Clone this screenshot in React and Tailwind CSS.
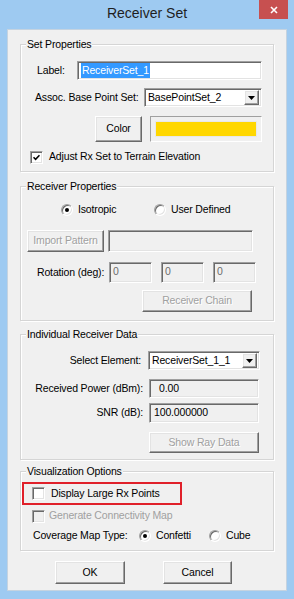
import React from 'react';

const font = { fontFamily: '"Liberation Sans", Arial, sans-serif' };

function Group({ title, className = '', children }) {
  return (
    <div className={`relative border border-[#d5d5d5] shadow-[1px_1px_0_#ffffff,inset_1px_1px_0_#ffffff] ${className}`}>
      <span className="absolute -top-[8px] left-[5px] bg-[#f0f0f0] px-[1px] leading-[14px] text-black">{title}</span>
      {children}
    </div>
  );
}

function Button({ children, disabled, className = '' }) {
  return (
    <div
      className={`flex items-center justify-center bg-[#f0f0f0] border border-t-white border-l-white border-r-[#696969] border-b-[#696969] shadow-[inset_-1px_-1px_0_#a0a0a0,inset_1px_1px_0_#e3e3e3] ${
        disabled ? 'text-[#a0a0a0] [text-shadow:1px_1px_0_#ffffff]' : 'text-black'
      } ${className}`}
    >
      {children}
    </div>
  );
}

function Field({ children, disabled, className = '' }) {
  return (
    <div
      className={`flex items-center border border-t-[#a0a0a0] border-l-[#a0a0a0] border-r-white border-b-white shadow-[inset_1px_1px_0_#696969,inset_-1px_-1px_0_#e3e3e3] ${
        disabled ? 'bg-[#f0f0f0] text-[#6d6d6d]' : 'bg-white text-black'
      } ${className}`}
    >
      {children}
    </div>
  );
}

function Select({ value, className = '' }) {
  return (
    <Field className={`pl-[3px] pr-[2px] ${className}`}>
      <span className="flex-1">{value}</span>
      <Button className="w-[15px] h-[15px]">
        <svg width="7" height="4" viewBox="0 0 7 4">
          <path d="M0 0h7L3.5 4z" fill="#000" />
        </svg>
      </Button>
    </Field>
  );
}

function Check({ checked, disabled }) {
  return (
    <div
      className={`w-[13px] h-[13px] flex items-center justify-center border border-t-[#a0a0a0] border-l-[#a0a0a0] border-r-white border-b-white shadow-[inset_1px_1px_0_#696969,inset_-1px_-1px_0_#e3e3e3] ${
        disabled ? 'bg-[#f0f0f0]' : 'bg-white'
      }`}
    >
      {checked && (
        <svg width="7" height="7" viewBox="0 0 7 7">
          <path d="M0.5 3.2 L2.6 5.3 L6.5 1.2" stroke="#000" strokeWidth="1.6" fill="none" />
        </svg>
      )}
    </div>
  );
}

function Radio({ checked }) {
  return (
    <div className="w-[12px] h-[12px] rounded-full flex items-center justify-center bg-white border border-t-[#a0a0a0] border-l-[#a0a0a0] border-r-white border-b-white shadow-[inset_1px_1px_0_#696969,inset_-1px_-1px_0_#e3e3e3]">
      {checked && <div className="w-[4px] h-[4px] rounded-full bg-black" />}
    </div>
  );
}

export default function App() {
  return (
    <div className="w-[294px] h-[599px] bg-[#9ecaf1] flex flex-col text-[10.5px] tracking-[-0.15px] text-black" style={font}>
      {/* title bar */}
      <div className="relative h-[29px] flex items-center justify-center">
        <span className="text-[14px] tracking-normal text-[#1e1e1e] -mt-[2px]">Receiver Set</span>
        <div className="absolute top-0 right-[6px] w-[29px] h-[19px] bg-[#c75050] flex items-center justify-center">
          <svg width="8" height="8" viewBox="0 0 8 8">
            <path d="M1 1L7 7M7 1L1 7" stroke="#fff" strokeWidth="1.6" />
          </svg>
        </div>
      </div>

      {/* dialog body */}
      <div className="flex-1 mx-[7px] mb-[8px] bg-[#f0f0f0] border border-[#c5d3e0] px-[12px] flex flex-col">
        <Group title="Set Properties" className="mt-[14px] pt-[16px] pb-[7px] pr-[11px]">
          <div className="flex items-center h-[19px]">
            <span className="ml-[16px]">Label:</span>
            <Field className="ml-auto w-[185px] h-[19px] pl-[3px]">
              <span className="bg-[#3399ff] text-white px-[1px]">ReceiverSet_1</span>
            </Field>
          </div>
          <div className="flex items-center h-[19px] mt-[8px]">
            <span className="ml-[14px]">Assoc. Base Point Set:</span>
            <Select value="BasePointSet_2" className="ml-auto w-[118px] h-[19px]" />
          </div>
          <div className="flex items-center justify-end h-[26px] mt-[9px] gap-[8px]">
            <Button className="w-[47px] h-[26px]">Color</Button>
            <div className="w-[112px] h-[26px] border border-t-[#a0a0a0] border-l-[#a0a0a0] border-r-white border-b-white p-[4px] bg-[#f0f0f0]">
              <div className="w-full h-full bg-[#ffd700] border border-[#e8e8e8]" />
            </div>
          </div>
          <div className="flex items-center h-[14px] mt-[8px] ml-[9px] gap-[6px]">
            <Check checked />
            <span>Adjust Rx Set to Terrain Elevation</span>
          </div>
        </Group>

        <Group title="Receiver Properties" className="mt-[14px] pt-[16px] pb-[8px]">
          <div className="flex items-center h-[14px] ml-[40px]">
            <div className="flex items-center gap-[5px] w-[93px]">
              <Radio checked />
              <span>Isotropic</span>
            </div>
            <div className="flex items-center gap-[5px]">
              <Radio />
              <span>User Defined</span>
            </div>
          </div>
          <div className="flex items-center h-[22px] mt-[13px] ml-[6px] gap-[4px]">
            <Button disabled className="w-[77px] h-[22px]">Import Pattern</Button>
            <Field disabled className="w-[145px] h-[22px]" />
          </div>
          <div className="flex items-center h-[21px] mt-[10px] ml-[16px]">
            <span className="w-[72px]">Rotation (deg):</span>
            <div className="flex gap-[9px]">
              {['0', '0', '0'].map((v, i) => (
                <Field key={i} disabled className="w-[43px] h-[21px] items-start pl-[3px] pt-[1px]">
                  {v}
                </Field>
              ))}
            </div>
          </div>
          <div className="flex h-[22px] mt-[7px] ml-[121px]">
            <Button disabled className="w-[110px] h-[22px]">Receiver Chain</Button>
          </div>
        </Group>

        <Group title="Individual Receiver Data" className="mt-[13px] pt-[16px] pb-[6px]">
          <div className="flex items-center h-[19px]">
            <span className="w-[120px] text-right">Select Element:</span>
            <Select value="ReceiverSet_1_1" className="ml-[7px] w-[112px] h-[19px]" />
          </div>
          <div className="flex items-center h-[19px] mt-[9px]">
            <span className="w-[122px] text-right">Received Power (dBm):</span>
            <Field disabled className="ml-[6px] w-[110px] h-[19px] pl-[9px] !text-black">0.00</Field>
          </div>
          <div className="flex items-center h-[20px] mt-[5px]">
            <span className="w-[122px] text-right">SNR (dB):</span>
            <Field disabled className="ml-[6px] w-[110px] h-[20px] pl-[4px] !text-black">100.000000</Field>
          </div>
          <div className="flex h-[21px] mt-[9px] ml-[128px]">
            <Button disabled className="w-[110px] h-[21px]">Show Ray Data</Button>
          </div>
        </Group>

        <Group title="Visualization Options" className="mt-[11px] pt-[10px] pb-[7px]">
          <div className="flex items-center ml-[1px] w-[160px] h-[23px] border-2 border-[#e0202a] pl-[8px] gap-[6px]">
            <Check />
            <span>Display Large Rx Points</span>
          </div>
          <div className="flex items-center h-[14px] mt-[4px] ml-[11px] gap-[4px] text-[#a0a0a0]">
            <Check disabled />
            <span>Generate Connectivity Map</span>
          </div>
          <div className="flex items-center h-[14px] mt-[6px] ml-[12px]">
            <span className="w-[106px]">Coverage Map Type:</span>
            <div className="flex items-center gap-[5px] w-[70px]">
              <Radio checked />
              <span>Confetti</span>
            </div>
            <div className="flex items-center gap-[5px]">
              <Radio />
              <span>Cube</span>
            </div>
          </div>
        </Group>

        <div className="flex mt-[10px] ml-[35px] gap-[38px]">
          <Button className="w-[70px] h-[23px]">OK</Button>
          <Button className="w-[69px] h-[23px]">Cancel</Button>
        </div>
      </div>
    </div>
  );
}
